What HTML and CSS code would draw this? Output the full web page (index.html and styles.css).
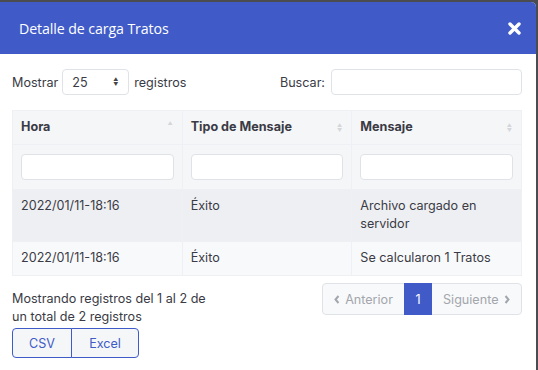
FILE: index.html
```html
<!DOCTYPE html>
<html lang="es">
<head>
    <meta charset="UTF-8">
    <title>Detalle de carga Tratos</title>
    <link rel="stylesheet" href="styles.css">
</head>
<body>
    <div class="modal">
        <div class="modal-header">
            <h2>Detalle de carga Tratos</h2>
            <svg class="close" width="13" height="13" viewBox="0 0 13 13">
                <path d="M2 2 L11 11 M11 2 L2 11" stroke="white" stroke-width="3.4" stroke-linecap="round"/>
            </svg>
        </div>
        <div class="modal-body">
            <div class="controls">
                <label class="length">Mostrar
                    <span class="select">25 <span class="arrows">&#9650;<br>&#9660;</span></span>
                    registros</label>
                <label class="search">Buscar: <input type="text"></label>
            </div>

            <table class="grid">
                <thead>
                    <tr>
                        <th>Hora <span class="sort up">&#9650;</span></th>
                        <th>Tipo de Mensaje <span class="sort">&#9650;<br>&#9660;</span></th>
                        <th>Mensaje <span class="sort">&#9650;<br>&#9660;</span></th>
                    </tr>
                    <tr class="filters">
                        <td><input type="text"></td>
                        <td><input type="text"></td>
                        <td><input type="text"></td>
                    </tr>
                </thead>
                <tbody>
                    <tr class="odd">
                        <td>2022/01/11-18:16</td>
                        <td>Éxito</td>
                        <td>Archivo cargado en servidor</td>
                    </tr>
                    <tr>
                        <td>2022/01/11-18:16</td>
                        <td>Éxito</td>
                        <td>Se calcularon 1 Tratos</td>
                    </tr>
                </tbody>
            </table>

            <div class="footer">
                <div>
                    <p class="info">Mostrando registros del 1 al 2 de un total de 2 registros</p>
                    <div class="buttons">
                        <button>CSV</button><button>Excel</button>
                    </div>
                </div>
                <ul class="pager">
                    <li class="disabled">
                        <svg class="chev" width="6" height="9" viewBox="0 0 6 9"><path d="M4.5 1 L1.5 4.5 L4.5 8" fill="none" stroke="#a3a6ad" stroke-width="2"/></svg>
                        Anterior</li>
                    <li class="active">1</li>
                    <li class="disabled">Siguiente
                        <svg class="chev" width="6" height="9" viewBox="0 0 6 9"><path d="M1.5 1 L4.5 4.5 L1.5 8" fill="none" stroke="#a3a6ad" stroke-width="2"/></svg>
                    </li>
                </ul>
            </div>
        </div>
    </div>
</body>
</html>
```

FILE: styles.css
```css
body {
    margin: 0;
    padding: 2px 2px 0 0;
    background-color: #4b4c4f;
    font-family: Inter, "Liberation Sans", sans-serif;
    font-size: 12.6px;
    color: #3a3b45;
    height: 368px;
    overflow: hidden;
}

.modal {
    width: 536px;
    height: 368px;
    background: white;
    border-top-right-radius: 5px;
    overflow: hidden;
}

.modal-header {
    background-color: #405bc8;
    height: 52px;
    display: flex;
    align-items: center;
    justify-content: space-between;
    padding: 0 15px 0 19px;
    box-sizing: border-box;
    color: white;
}

.modal-header h2 {
    margin: 0;
    font-family: "Open Sans", sans-serif;
    font-weight: normal;
    font-size: 14.2px;
    letter-spacing: -0.1px;
}

.modal-body {
    padding: 15px 14px 0 12px;
}

.controls {
    display: flex;
    justify-content: space-between;
    align-items: center;
    height: 26px;
    margin-bottom: 15px;
}

.length, .search {
    display: flex;
    align-items: center;
}

.select {
    display: flex;
    align-items: center;
    justify-content: space-between;
    width: 67px;
    height: 26px;
    box-sizing: border-box;
    margin: 0 5px 0 4px;
    padding: 0 10px 0 9px;
    border: 1px solid #dfe2e7;
    border-radius: 4px;
}

.arrows, .sort {
    font-size: 5px;
    line-height: 5px;
    color: #444;
    text-align: center;
}

.search input {
    width: 191px;
    margin-left: 6px;
}

input[type="text"] {
    height: 26px;
    box-sizing: border-box;
    border: 1px solid #dfe2e7;
    border-radius: 4px;
    background: white;
    padding: 0 6px;
}

.grid {
    width: 510px;
    border-collapse: collapse;
    table-layout: fixed;
}

.grid th, .grid td {
    text-align: left;
    padding: 7px 8px 8px;
    line-height: 18px;
    vertical-align: top;
    border: 1px solid #eef0f3;
}

.grid th {
    font-weight: 700;
    background: #f5f6f8;
    position: relative;
}

.sort {
    position: absolute;
    right: 9px;
    top: 12px;
    color: #d4d6da;
}

.sort.up {
    top: 10px;
}

.filters td {
    background: #f5f6f8;
    padding: 9px 8px;
}

.filters input {
    width: 100%;
    display: block;
}

.grid tbody tr.odd td {
    background: #eeeff2;
}

.grid tbody tr td {
    background: #f8f9fa;
}

.footer {
    display: flex;
    justify-content: space-between;
    margin-top: 7px;
}

.info {
    margin: 7px 0 2px;
    width: 200px;
    line-height: 18px;
}

.buttons {
    display: flex;
}

.buttons button {
    font-family: Inter, sans-serif;
    font-size: 12.6px;
    color: #405bc8;
    background: #f5f6f8;
    border: 1px solid #405bc8;
    height: 30px;
    padding: 0;
    cursor: pointer;
}

.buttons button:first-child {
    border-radius: 4px 0 0 4px;
    width: 60px;
}

.buttons button:last-child {
    border-radius: 0 4px 4px 0;
    margin-left: -1px;
    width: 68px;
}

.pager {
    list-style: none;
    margin: 0;
    padding: 0;
    display: flex;
    height: 32px;
    border: 1px solid #dfe2e7;
    border-radius: 4px;
    background: #f8f9fa;
    box-sizing: border-box;
}

.pager li {
    display: flex;
    align-items: center;
    gap: 5px;
    padding: 0 11.5px;
    color: #a3a6ad;
    font-size: 12.6px;
}

.pager li.active {
    background: #405bc8;
    color: white;
    margin: -1px 0;
    padding: 0 11px;
}
```
